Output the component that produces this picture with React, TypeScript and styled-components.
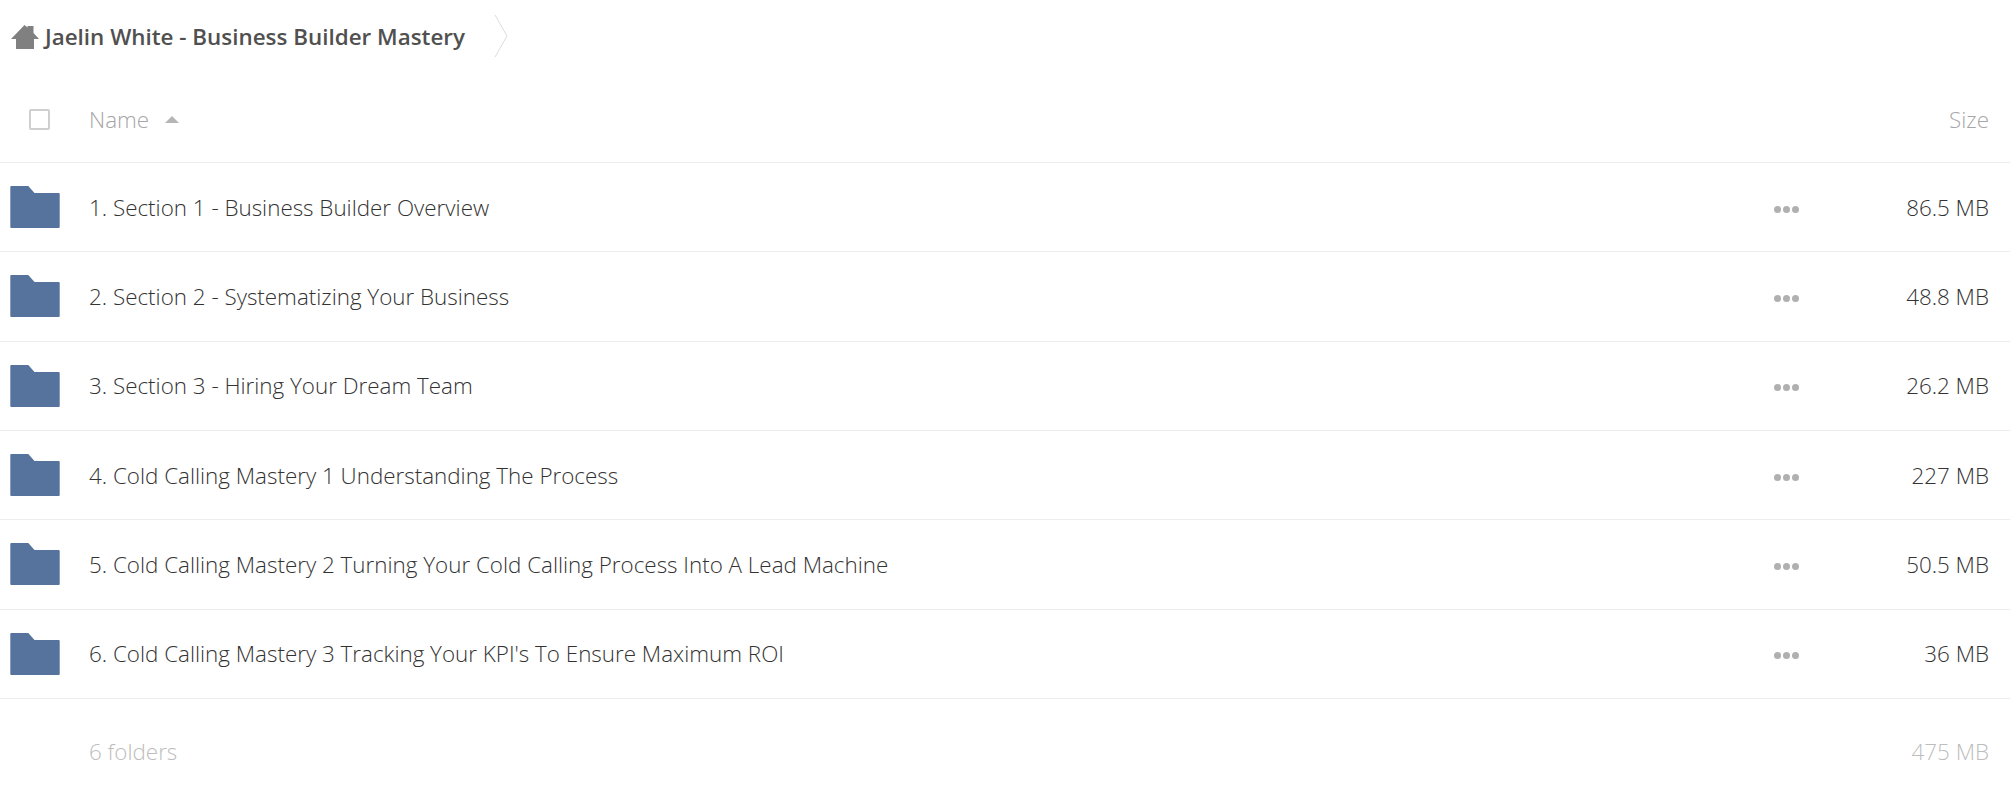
import React from 'react';
import styled, { createGlobalStyle } from 'styled-components';

const Global = createGlobalStyle`
  html, body { margin: 0; padding: 0; background: #fff; }
  body { font-family: "Open Sans", "Liberation Sans", sans-serif; font-weight: 300; color: #333; }
`;

const Page = styled.div`
  width: 2010px;
  height: 796px;
  overflow: hidden;
`;

const Breadcrumb = styled.nav`
  display: flex;
  align-items: center;
  height: 74px;
  padding-left: 11px;
`;

const Crumb = styled.span`
  margin: 0 0 2px 6px;
  font-size: 22.4px;
  font-weight: 600;
  color: #505050;
`;

const Chevron = styled.svg`
  margin: 0 0 2px 29px;
  width: 14px;
  height: 42px;
`;

const HeaderRow = styled.div`
  display: flex;
  align-items: center;
  height: 89px;
  padding-top: 2px;
  box-sizing: border-box;
  border-bottom: 1px solid #ededed;
  font-size: 22.4px;
  color: #a6a6a6;
`;

const CheckCell = styled.div`
  width: 90px;
  padding: 1px 0 0 29px;
  box-sizing: border-box;
  flex: none;
`;

const Checkbox = styled.span`
  display: block;
  width: 21px;
  height: 21px;
  border: 2px solid #cfcfcf;
  border-radius: 2px;
  box-sizing: border-box;
`;

const SortLabel = styled.div`
  flex: 1;
  display: flex;
  align-items: center;
  gap: 16px;
  margin-left: -1px;
`;

const Caret = styled.span`
  width: 0;
  height: 0;
  border-left: 7px solid transparent;
  border-right: 7px solid transparent;
  border-bottom: 7px solid #b5b5b5;
`;

const SizeCell = styled.div`
  width: 150px;
  padding-right: 21px;
  box-sizing: border-box;
  text-align: right;
  flex: none;
`;

const Row = styled.div`
  display: flex;
  align-items: center;
  height: 89.33px;
  box-sizing: border-box;
  border-bottom: 1px solid #ededed;
  font-size: 22.4px;
  color: #333;
`;

const IconCell = styled.div`
  width: 89px;
  padding-left: 10px;
  box-sizing: border-box;
  flex: none;
  display: flex;
`;

const RowName = styled.div`
  flex: 1;
`;

const Dots = styled.div`
  display: flex;
  gap: 2px;
  margin-right: 61px;
  padding-top: 4px;
`;

const Dot = styled.span`
  width: 7px;
  height: 7px;
  border-radius: 50%;
  background: #b0b0b0;
`;

const SummaryRow = styled.div`
  display: flex;
  align-items: center;
  height: 106px;
  font-size: 22.4px;
  color: #bdbdbd;
`;

const SummaryName = styled.div`
  flex: 1;
  padding-left: 89px;
`;

const rows = [
  ['1. Section 1 - Business Builder Overview', '86.5 MB'],
  ['2. Section 2 - Systematizing Your Business', '48.8 MB'],
  ['3. Section 3 - Hiring Your Dream Team', '26.2 MB'],
  ['4. Cold Calling Mastery 1 Understanding The Process', '227 MB'],
  ['5. Cold Calling Mastery 2 Turning Your Cold Calling Process Into A Lead Machine', '50.5 MB'],
  ["6. Cold Calling Mastery 3 Tracking Your KPI's To Ensure Maximum ROI", '36 MB'],
];

const Folder = () => (
  <svg width="50" height="42" viewBox="0 0 50 42">
    <path d="M1.3 0H18.3L24.5 7H48.7a1 1 0 0 1 1 1V41a1 1 0 0 1-1 1H1.3a1 1 0 0 1-1-1V1a1 1 0 0 1 1-1Z" fill="#55739c" />
  </svg>
);

const Home = () => (
  <svg width="28" height="24" viewBox="0 0 28 24">
    <path d="M13.5 0L16.5 2.5V1H22.5V8L28 14H23V24H5V14H0Z" fill="#808080" />
  </svg>
);

export default function App() {
  return (
    <Page>
      <Global />
      <Breadcrumb>
        <Home />
        <Crumb>Jaelin White - Business Builder Mastery</Crumb>
        <Chevron viewBox="0 0 14 42">
          <path d="M1 0L13 21L1 42" fill="none" stroke="#dcdcdc" strokeWidth="1" />
        </Chevron>
      </Breadcrumb>
      <HeaderRow>
        <CheckCell><Checkbox /></CheckCell>
        <SortLabel>Name<Caret /></SortLabel>
        <SizeCell>Size</SizeCell>
      </HeaderRow>
      {rows.map(([name, size]) => (
        <Row key={name}>
          <IconCell><Folder /></IconCell>
          <RowName>{name}</RowName>
          <Dots><Dot /><Dot /><Dot /></Dots>
          <SizeCell>{size}</SizeCell>
        </Row>
      ))}
      <SummaryRow>
        <SummaryName>6 folders</SummaryName>
        <SizeCell>475 MB</SizeCell>
      </SummaryRow>
    </Page>
  );
}
